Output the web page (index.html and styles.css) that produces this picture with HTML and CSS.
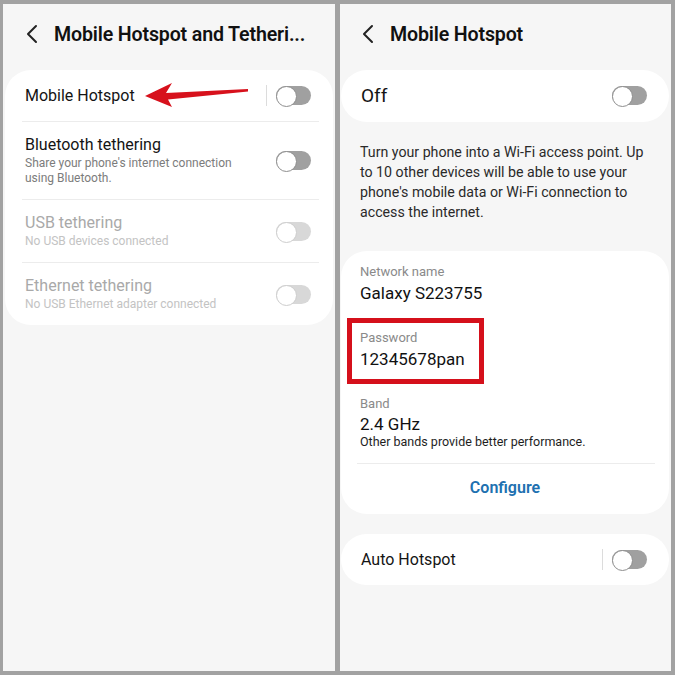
FILE: index.html
```html
<!DOCTYPE html>
<html>
<head>
<meta charset="utf-8">
<link rel="stylesheet" href="styles.css">
</head>
<body>
<div class="frame">
  <section class="panel left">
    <header class="head">
      <svg class="back" width="14" height="20" viewBox="0 0 14 20"><polyline points="11,2 3,10 11,18" fill="none" stroke="#222" stroke-width="2" stroke-linecap="round" stroke-linejoin="round"/></svg>
      <h1 class="title">Mobile Hotspot and Tetheri...</h1>
    </header>
    <div class="card">
      <div class="row first">
        <div class="row-text"><div class="row-title">Mobile Hotspot</div></div>
        <span class="vsep"></span>
        <span class="toggle"></span>
        <svg class="arrow" width="110" height="30" viewBox="0 0 110 30"><polygon points="1,14 28,1 22,11 104,7 104,9.5 24,17.5 28,25" fill="#d7111c"/></svg>
      </div>
      <div class="divider"></div>
      <div class="row">
        <div class="row-text">
          <div class="row-title">Bluetooth tethering</div>
          <div class="row-sub">Share your phone's internet connection<br>using Bluetooth.</div>
        </div>
        <span class="toggle"></span>
      </div>
      <div class="divider"></div>
      <div class="row disabled">
        <div class="row-text">
          <div class="row-title">USB tethering</div>
          <div class="row-sub">No USB devices connected</div>
        </div>
        <span class="toggle"></span>
      </div>
      <div class="divider"></div>
      <div class="row disabled">
        <div class="row-text">
          <div class="row-title">Ethernet tethering</div>
          <div class="row-sub">No USB Ethernet adapter connected</div>
        </div>
        <span class="toggle"></span>
      </div>
    </div>
  </section>

  <section class="panel right">
    <header class="head">
      <svg class="back" width="14" height="20" viewBox="0 0 14 20"><polyline points="11,2 3,10 11,18" fill="none" stroke="#222" stroke-width="2" stroke-linecap="round" stroke-linejoin="round"/></svg>
      <h1 class="title">Mobile Hotspot</h1>
    </header>
    <div class="card">
      <div class="row off-row">
        <div class="row-text"><div class="off">Off</div></div>
        <span class="toggle"></span>
      </div>
    </div>
    <p class="desc">Turn your phone into a Wi-Fi access point. Up to 10 other devices will be able to use your phone's mobile data or Wi-Fi connection to access the internet.</p>
    <div class="card info">
      <div class="item">
        <div class="label">Network name</div>
        <div class="value">Galaxy S223755</div>
      </div>
      <div class="item pw">
        <div class="label">Password</div>
        <div class="value">12345678pan</div>
        <span class="highlight"></span>
      </div>
      <div class="item">
        <div class="label">Band</div>
        <div class="value">2.4 GHz</div>
        <div class="note">Other bands provide better performance.</div>
      </div>
      <div class="divider"></div>
      <div class="configure">Configure</div>
    </div>
    <div class="card auto">
      <div class="row first">
        <div class="row-text"><div class="row-title">Auto Hotspot</div></div>
        <span class="vsep"></span>
        <span class="toggle"></span>
      </div>
    </div>
  </section>
</div>
</body>
</html>
```

FILE: styles.css
```css
* { box-sizing: border-box; }
html, body { margin: 0; padding: 0; }
body {
  width: 675px;
  height: 675px;
  background: #a2a2a2;
  font-family: Roboto, "Noto Sans", "Liberation Sans", sans-serif;
  color: #111;
  overflow: hidden;
}
.frame {
  display: flex;
  gap: 5px;
  padding: 4px 4px 4px 3px;
  height: 675px;
}
.panel {
  background: #f6f6f6;
  height: 667px;
  padding: 0 2px;
}
.panel.left { width: 332px; }
.panel.right { width: 331px; padding: 0 2px 0 1px; }

.head {
  display: flex;
  align-items: center;
  height: 66px;
  padding: 0 0 6px 20px;
}
.back { display: block; margin-right: 15px; }
.title {
  margin: 0;
  font-size: 19.6px;
  font-weight: 600;
  color: #111;
  letter-spacing: -0.15px;
}

.card {
  background: #fff;
  border-radius: 26px;
}
.row {
  display: flex;
  align-items: center;
  padding: 13px 22px 13px 20px;
  position: relative;
}
.row.first { padding-top: 15px; padding-bottom: 15px; }
.row-text { flex: 1; }
.row-title { font-size: 16px; line-height: 20px; color: #141414; }
.row-sub { font-size: 12px; line-height: 15px; color: #7c7c7c; margin-top: 1px; }
.row.disabled .row-title { color: #a9a9a9; }
.row.disabled .row-sub { color: #c3c3c3; }

.divider {
  height: 1px;
  background: #ececec;
  margin: 0 14px 0 17px;
}
.vsep {
  width: 1px;
  height: 21px;
  background: #dcdcdc;
  margin-right: 9px;
}
.toggle {
  position: relative;
  width: 35px;
  height: 19px;
  border-radius: 10px;
  background: #a0a0a0;
  flex: none;
}
.toggle::before {
  content: "";
  position: absolute;
  left: 0;
  top: 0;
  width: 19px;
  height: 19px;
  border-radius: 50%;
  background: #fff;
  border: 1.5px solid #8e8e8e;
}
.row.disabled .toggle { background: #d8d8d8; }
.row.disabled .toggle::before { border-color: #cdcdcd; }

.arrow {
  position: absolute;
  left: 139px;
  top: 12px;
}

.off-row { padding-top: 15px; padding-bottom: 16px; }
.off { font-size: 19px; line-height: 21px; color: #141414; }

.desc {
  margin: 20px 18px 0 19px;
  font-size: 14.2px;
  line-height: 20px;
  color: #2a2a2a;
  height: 109px;
}

.info { padding-top: 12px; }
.item {
  position: relative;
  padding: 0 20px 0 19px;
  margin-bottom: 24px;
}
.item:nth-child(3) { margin-bottom: 14px; }
.label { font-size: 13px; line-height: 18px; color: #8a8a8a; }
.value { font-size: 17px; line-height: 24px; color: #111; }
.item:nth-child(3) .value { line-height: 22px; }
.note { font-size: 12.5px; line-height: 14px; color: #1e1e1e; }
.highlight {
  position: absolute;
  left: 6px;
  top: -11px;
  width: 137px;
  height: 66px;
  border: 5px solid #d5101b;
}
.info .divider { margin: 0 14px 0 16px; }
.configure {
  height: 50px;
  display: flex;
  align-items: center;
  justify-content: center;
  font-size: 16px;
  font-weight: 600;
  color: #2070b0;
  padding-bottom: 4px;
}
.card.auto { margin-top: 20px; }
```
